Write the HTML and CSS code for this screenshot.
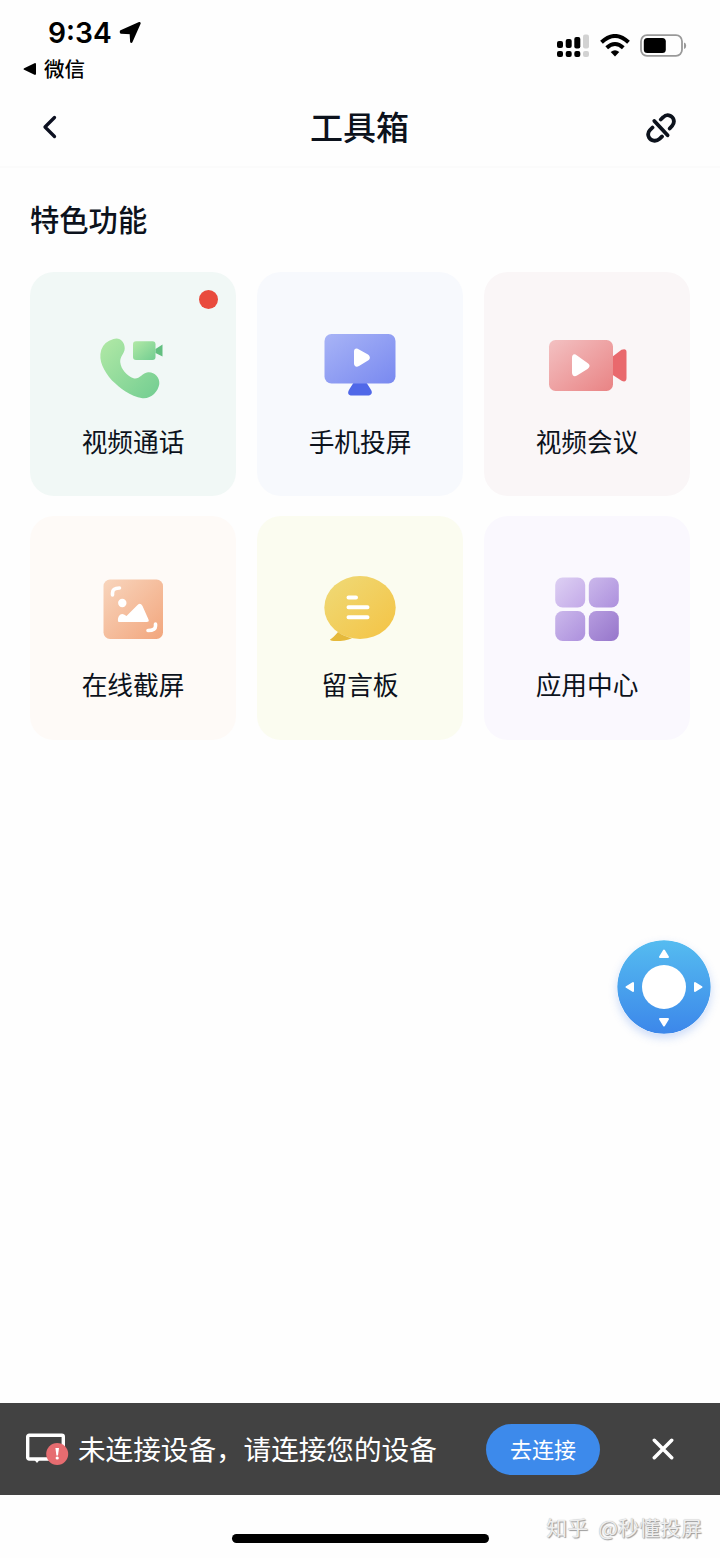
FILE: index.html
```html
<!DOCTYPE html>
<html lang="zh-CN">
<head>
<meta charset="utf-8">
<title>工具箱</title>
<link rel="stylesheet" href="styles.css">
</head>
<body>
<div class="screen">
  <div class="status">
    <div class="status-left">
      <div class="clock">
        <span class="time">9:34</span>
        <svg width="24" height="24" viewBox="0 0 24 24"><path d="M2 10.300 20.500 2.200 12.300 20.700 11.800 12 2 11.500Z" fill="#000" stroke="#000" stroke-width="2.400" stroke-linejoin="round"/></svg>
      </div>
      <div class="back-app">
        <svg width="14" height="14" viewBox="0 0 14 14"><path d="M1.200 6.200 11.500 1.200Q13 .8 13 2.200V11.800Q13 13.200 11.500 12.800L1.200 7.800Q-.2 7 1.200 6.200Z" fill="#000"/></svg>
        <span>微信</span>
      </div>
    </div>
    <div class="status-right">
      <svg width="32" height="24" viewBox="0 0 32 24">
        <g fill="#000"><rect x="0" y="7" width="6" height="7" rx="2"/><rect x="8.700" y="5" width="6" height="9" rx="2"/><rect x="17.300" y="3" width="6" height="11.500" rx="2"/><rect x="0" y="17" width="6" height="6" rx="2"/><rect x="8.700" y="17" width="6" height="6" rx="2"/><rect x="17.300" y="17" width="6" height="6" rx="2"/></g>
        <g fill="#d2d2d2"><rect x="26" y=".5" width="6" height="14" rx="2"/><rect x="26" y="17" width="6" height="6" rx="2"/></g>
      </svg>
      <svg class="wifi" width="30" height="24" viewBox="0 0 30 24"><g fill="none" stroke="#000" stroke-width="4"><path d="M1.500 8.300Q15-4.300 28.500 8.300"/><path d="M6.700 13.800Q15 6.200 23.300 13.800"/></g><path d="M10.700 18Q15 14.300 19.300 18L15 22.500Z" fill="#000"/></svg>
      <svg width="47" height="24" viewBox="0 0 47 24"><rect x="1" y="1.200" width="41" height="20.600" rx="6" fill="none" stroke="#999" stroke-width="1.800"/><rect x="3.800" y="4" width="22" height="15" rx="3.500" fill="#000"/><path d="M44 8.500Q46.200 9 46.200 11.700T44 15Z" fill="#999"/></svg>
    </div>
  </div>

  <header class="nav">
    <svg width="16" height="24" viewBox="0 0 16 24"><path d="M12.500 2.500 3 12 12.500 21.500" fill="none" stroke="#0c1020" stroke-width="3.300" stroke-linecap="round" stroke-linejoin="round"/></svg>
    <h1>工具箱</h1>
    <svg class="unlink" width="32" height="32" viewBox="0 0 32 32"><g fill="none" stroke="#0c121c" stroke-width="3.800" stroke-linecap="round"><path d="M9.300 9 22.600 23.300"/><path d="M15.800 7.500 18.200 5.200C21.500 1.800 26.500 3 28.200 6.500 29.500 9.500 29 11.700 27.200 13.700L24.700 16.500"/><path d="M17 24.500 14.500 26.800C11 30 6 29 4 25.500 2.500 22.500 3 20.200 4.800 18.300L7.500 15.500"/></g></svg>
  </header>

  <main class="content">
    <h2>特色功能</h2>
    <div class="tiles">
      <div class="tile green">
        <i class="dot"></i>
        <svg width="80" height="72" viewBox="0 0 80 72">
          <defs><linearGradient id="g1" x1="0" y1="0" x2="1" y2="1"><stop offset="0" stop-color="#b2e9a6"/><stop offset="1" stop-color="#72cd91"/></linearGradient></defs>
          <path d="M20.500 6C26.500 3.500 32 9 31.700 15.500 31.500 21 27 23 27.200 29 28 36.500 34 43 40.500 45.300 46 47 49 40 55 39.200 61 38.500 67 44 66.300 51 65 59 58 66 49.500 65.200 37 63.500 27 55 19 47.500 11 38 5 28 8.200 17Q11 8.500 20.500 6Z" fill="url(#g1)"/>
          <rect x="40" y="8.300" width="22.500" height="18.700" rx="3" fill="url(#g1)"/><path d="M62.500 16 69.500 11.500V23.500L62.500 20Z" fill="#63bf80"/>
        </svg>
        <span>视频通话</span>
      </div>
      <div class="tile blue">
        <svg width="80" height="72" viewBox="0 0 80 72">
          <defs><linearGradient id="g2" x1="0" y1="0" x2="1" y2="1"><stop offset="0" stop-color="#a8b4f6"/><stop offset="1" stop-color="#7989f0"/></linearGradient></defs>
          <path d="M34 49H46Q48 52 50.500 56C53.500 60 51 62.500 48 62.500H32C28 62.500 27 60 29.500 56Z" fill="#5068e8"/>
          <rect x="4.500" y="1" width="71" height="49.500" rx="7" fill="url(#g2)"/>
          <path d="M34 18.500C34 15.500 36.500 14.800 39 16.500L48 21.500C50.500 23.500 50.500 26 48 27.500L39 33C36.500 34.500 34 33.500 34 30.500Z" fill="#fff"/>
        </svg>
        <span>手机投屏</span>
      </div>
      <div class="tile red">
        <svg width="80" height="72" viewBox="0 0 80 72">
          <defs><linearGradient id="g3" x1="0" y1="0" x2="1" y2="1"><stop offset="0" stop-color="#f3c1c2"/><stop offset="1" stop-color="#e98384"/></linearGradient></defs>
          <path d="M65 24 74.500 16.800Q79.500 15 79.500 19V45Q79.500 49.500 75 48L65 41.500Z" fill="#e9696d"/>
          <rect x="2" y="7" width="64" height="51" rx="6.500" fill="url(#g3)"/>
          <path d="M25 25C25 21 27.500 20.500 30 22.500L40.500 30C43.500 32 43 34 40.500 36L30 42.500C27.500 44 25 43 25 39.500Z" fill="#fff"/>
        </svg>
        <span>视频会议</span>
      </div>
      <div class="tile orange">
        <svg width="80" height="72" viewBox="0 0 80 72">
          <defs><linearGradient id="g4" x1="0" y1="0" x2="1" y2="1"><stop offset="0" stop-color="#f8d5bd"/><stop offset="1" stop-color="#f2a67d"/></linearGradient></defs>
          <rect x="10.500" y="3.500" width="59.500" height="59.500" rx="6.500" fill="url(#g4)"/>
          <circle cx="29.300" cy="27" r="4.200" fill="#fff"/>
          <path d="M25 45C24.500 40 28 36.500 31 38.500L33.500 40 44 29.500Q47 26 49.500 30L55.500 43.500Q56.500 46 53.500 46H26Q25 46 25 45Z" fill="#fff"/>
          <path d="M19.500 19V17Q19.500 12 26.500 12M62.500 48V50Q62.500 54.500 55 54.500" fill="none" stroke="#fff" stroke-width="3.600" stroke-linecap="round"/>
        </svg>
        <span>在线截屏</span>
      </div>
      <div class="tile yellow">
        <svg width="80" height="72" viewBox="0 0 80 72">
          <defs><linearGradient id="g5" x1="0" y1="0" x2="1" y2="1"><stop offset="0" stop-color="#efda78"/><stop offset="1" stop-color="#f4c344"/></linearGradient></defs>
          <ellipse cx="40" cy="31.500" rx="35.700" ry="31.500" fill="url(#g5)"/>
          <path d="M18 56Q12 63 10 63.500C10 66 25 65.500 32 62.200Q23 60 18 56Z" fill="#e5b93b"/>
          <path d="M28.500 21.500H36M28.500 31.300H47.500M28.500 41.200H47.500" stroke="#fff" stroke-width="4" stroke-linecap="round"/>
        </svg>
        <span>留言板</span>
      </div>
      <div class="tile purple">
        <svg width="80" height="72" viewBox="0 0 80 72">
          <defs><linearGradient id="g6" x1="0" y1="0" x2="1" y2="1"><stop offset="0" stop-color="#ddd0f3"/><stop offset="1" stop-color="#c3a9e8"/></linearGradient><linearGradient id="g7" x1="0" y1="0" x2="1" y2="1"><stop offset="0" stop-color="#cbb8eb"/><stop offset="1" stop-color="#ad90dd"/></linearGradient><linearGradient id="g8" x1="0" y1="0" x2="1" y2="1"><stop offset="0" stop-color="#b69cdf"/><stop offset="1" stop-color="#9676cb"/></linearGradient></defs>
          <rect x="8.200" y="1.500" width="30" height="30" rx="7.500" fill="url(#g6)"/><rect x="41.800" y="1.500" width="30" height="30" rx="7.500" fill="url(#g7)"/><rect x="8.200" y="35" width="30" height="30" rx="7.500" fill="url(#g7)"/><rect x="41.800" y="35" width="30" height="30" rx="7.500" fill="url(#g8)"/>
        </svg>
        <span>应用中心</span>
      </div>
    </div>
  </main>

  <div class="toast">
    <svg class="device" width="44" height="34" viewBox="0 0 44 34"><rect x="2.700" y="3.200" width="35.600" height="23.800" rx="1.500" fill="none" stroke="#fff" stroke-width="3.400"/><path d="M9.500 28H14.500L12 31Z" fill="#fff"/><circle cx="32.200" cy="22" r="11" fill="#e66c70"/><path d="M30.400 16H34L33 23.500H31.400Z" fill="#fff"/><circle cx="32.200" cy="26" r="1.600" fill="#fff"/></svg>
    <span class="message">未连接设备，请连接您的设备</span>
    <button class="connect">去连接</button>
    <svg class="close" width="22" height="22" viewBox="0 0 22 22"><path d="M2.300 2.300 19.700 19.700M19.700 2.300 2.300 19.700" stroke="#fff" stroke-width="3.500" stroke-linecap="round"/></svg>
  </div>
  <footer class="bottom"><div class="home-bar"></div><span class="watermark">知乎 @秒懂投屏</span></footer>

  <svg class="pad" width="94" height="94" viewBox="0 0 94 94">
    <defs><linearGradient id="g9" x1="0" y1="0" x2="0" y2="1"><stop offset="0" stop-color="#55bcf0"/><stop offset="1" stop-color="#3c87ea"/></linearGradient></defs>
    <circle cx="47" cy="47" r="46.700" fill="url(#g9)"/><circle cx="47" cy="47" r="22" fill="#fff"/>
    <g fill="#fff" stroke="#fff" stroke-width="2" stroke-linejoin="round"><path d="M47 10.500 51 17H43Z"/><path d="M47 85.500 51 79H43Z"/><path d="M9.500 47 16 43V51Z"/><path d="M84.500 47 78 43V51Z"/></g>
  </svg>
</div>
</body>
</html>
```
FILE: styles.css
```css
* { box-sizing: border-box; }
body { margin: 0; background: #fefefe; font-family: "Noto Sans CJK SC", sans-serif; color: #0c121c; }
svg { display: block; flex: none; }
.screen { position: relative; width: 720px; height: 1558px; display: flex; flex-direction: column; overflow: hidden; }
.status { height: 88px; display: flex; justify-content: space-between; padding: 19px 33px 0 23px; color: #000; }
.clock { display: flex; align-items: center; gap: 7px; height: 28px; padding-left: 25px; }
.time { font: 600 28.200px/28px Inter, sans-serif; }
.back-app { display: flex; align-items: center; gap: 7px; height: 30px; margin-top: 6px; font-size: 20.500px; line-height: 30px; font-weight: 500; }
.back-app svg { margin-top: 2px; }
.back-app span { padding-bottom: 1px; }
.status-right { display: flex; padding-top: 15px; height: 39px; }
.status-right .wifi { margin: 0 10px 0 11px; }
.nav { height: 80px; display: grid; grid-template-columns: 1fr auto 1fr; align-items: center; padding: 0 43px 0 42px; border-bottom: 2px solid #fbfbfb; }
.nav h1 { margin: 0; padding-bottom: 3px; font-size: 33px; line-height: 40px; font-weight: 500; }
.unlink { justify-self: end; margin-top: 2px; }
.content { flex: 1; padding: 28px 29px 0 30px; }
.content h2 { margin: 0; font-size: 29.300px; line-height: 44px; font-weight: 500; }
.tiles { display: grid; grid-template-columns: repeat(3, 206px); gap: 20px 21px; margin-top: 32px; }
.tile { position: relative; height: 224px; border-radius: 24px; display: flex; flex-direction: column; align-items: center; padding-top: 61px; font-size: 25.700px; line-height: 36px; }
.tile span { margin-top: 18px; }
.green { background: #f1f8f6; }
.blue { background: #f7f9fd; }
.red { background: #faf6f7; }
.orange, .yellow, .purple { padding-top: 60px; }
.orange { background: #fefaf7; }
.yellow { background: #fbfcf0; }
.purple { background: #faf8fe; }
.dot { position: absolute; top: 18px; right: 18px; width: 19px; height: 19px; border-radius: 50%; background: #e94b3d; }
.toast { height: 92px; background: #424242; display: flex; align-items: center; padding: 0 46px 0 25px; color: #fff; }
.message { margin-left: 9px; padding-bottom: 2px; font-size: 27.600px; line-height: 40px; white-space: nowrap; }
.connect { width: 114px; height: 51px; margin-left: auto; border: 0; padding: 0 0 3px; border-radius: 26px; background: #3d8aeb; color: #fff; font: 22px/32px "Noto Sans CJK SC", sans-serif; }
.close { margin-left: 52px; }
.bottom { height: 63px; display: grid; grid-template-columns: 232px 257px 1fr; align-items: center; }
.home-bar { grid-column: 2; height: 9px; margin-top: 23px; border-radius: 5px; background: #000; }
.watermark { justify-self: end; padding: 1px 18px 0 0; font-size: 20.800px; word-spacing: 5px; letter-spacing: .2px; line-height: 30px; color: #eee; text-shadow: 1px 1px 1px #999, 0 0 1px #aaa; white-space: nowrap; }
.pad { position: absolute; left: 616.500px; top: 940px; border-radius: 50%; box-shadow: 0 4px 9px rgba(60, 120, 230, .25); }
```
